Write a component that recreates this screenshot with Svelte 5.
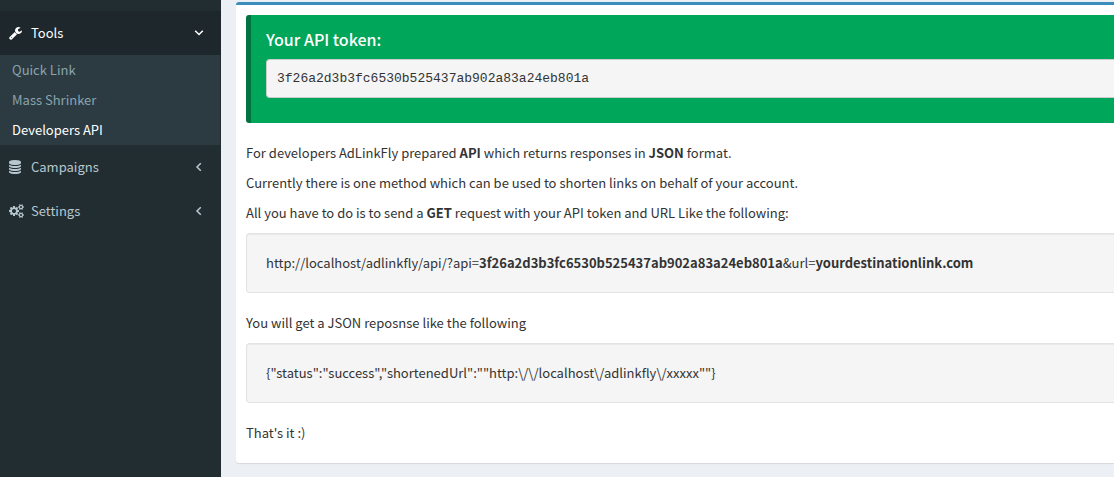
<script>
  const token = '3f26a2d3b3fc6530b525437ab902a83a24eb801a';
  const response = '{"status":"success","shortenedUrl":""http:\\/\\/localhost\\/adlinkfly\\/xxxxx""}';

  const cog =
    'v140q0 16-149 31-12 27-30 52 51 113 51 138 0 4-4 7-122 71-124 71-8 0-46-47t-52-68q-20 2-30 2t-30-2q-14 21-52 68t-46 47q-2 0-124-71-4-3-4-7 0-25 51-138-18-25-30-52-149-15-149-31v-140q0-16 149-31 13-29 30-52-51-113-51-138 0-4 4-7 4-2 35-20t59-34 30-16q8 0 46 46.5t52 67.5q20-2 30-2t30 2q51-71 92-112l6-2q4 0 124 70 4 3 4 7 0 25-51 138 17 23 30 52 149 15 149 31z';

  const icons = {
    wrench: {
      box: '64 0 1664 1792',
      width: 13,
      path: 'M448 1472q0-26-19-45t-45-19-45 19-19 45 19 45 45 19 45-19 19-45zm644-420l-682 682q-37 37-90 37-52 0-91-37l-106-108q-38-36-38-90 0-53 38-91l681-681q39 98 114.5 173.5t173.5 114.5zm634-435q0 39-23 106-47 134-164.5 217.5t-258.5 83.5q-185 0-316.5-131.5t-131.5-316.5 131.5-316.5 316.5-131.5q58 0 121.5 16.5t107.5 46.5q16 11 16 28t-16 28l-293 169v224l193 107q5-3 79-48.5t135.5-81 70.5-35.5q15 0 23.5 10t8.5 25z'
    },
    database: {
      box: '128 0 1536 1792',
      width: 12,
      path: 'M896 768q237 0 443-43t325-127v170q0 69-103 128t-280 93.5-385 34.5-385-34.5-280-93.5-103-128v-170q119 84 325 127t443 43zm0 768q237 0 443-43t325-127v170q0 69-103 128t-280 93.5-385 34.5-385-34.5-280-93.5-103-128v-170q119 84 325 127t443 43zm0-384q237 0 443-43t325-127v170q0 69-103 128t-280 93.5-385 34.5-385-34.5-280-93.5-103-128v-170q119 84 325 127t443 43zm0-1152q208 0 385 34.5t280 93.5 103 128v128q0 69-103 128t-280 93.5-385 34.5-385-34.5-280-93.5-103-128v-128q0-69 103-128t280-93.5 385-34.5z'
    },
    cogs: {
      box: '0 0 1920 1792',
      width: 15,
      path:
        'M896 896q0-106-75-181t-181-75-181 75-75 181 75 181 181 75 181-75 75-181zm768 512q0-52-38-90t-90-38-90 38-38 90q0 53 37.5 90.5t90.5 37.5 90.5-37.5 37.5-90.5zm0-1024q0-52-38-90t-90-38-90 38-38 90q0 53 37.5 90.5t90.5 37.5 90.5-37.5 37.5-90.5zm-384 421v185q0 10-7 19.5t-16 10.5l-155 24q-11 35-32 76 34 48 90 115 7 11 7 20 0 12-7 19-23 30-82.5 89.5t-78.5 59.5q-11 0-21-7l-115-90q-37 19-77 31-11 108-23 155-7 24-30 24h-186q-11 0-20-7.5t-10-17.5l-23-153q-34-10-75-31l-118 89q-7 7-20 7-11 0-21-8-144-133-144-160 0-9 7-19 10-14 41-53t47-61q-23-44-35-82l-152-24q-10-1-17-9.5t-7-19.5v-185q0-10 7-19.5t16-10.5l155-24q11-35 32-76-34-48-90-115-7-11-7-20 0-12 7-20 22-30 82-89t79-59q11 0 21 7l115 90q34-18 77-32 11-108 23-154 7-24 30-24h186q11 0 20 7.5t10 17.5l23 153q34 10 75 31l118-89q8-7 20-7 11 0 21 8 144 133 144 160 0 8-7 19-12 16-42 54t-45 60q23 48 34 82l152 23q10 2 17 10.5t7 19.5z' +
        'M1920 1338' + cog + 'M1920 314' + cog
    }
  };

  let menu = $state([
    {
      label: 'Tools',
      icon: icons.wrench,
      open: true,
      links: ['Quick Link', 'Mass Shrinker', 'Developers API']
    },
    { label: 'Campaigns', icon: icons.database, open: false, links: [] },
    { label: 'Settings', icon: icons.cogs, open: false, links: [] }
  ]);
</script>

<div class="page">
  <nav class="sidebar">
    <ul>
      {#each menu as item}
        <li>
          <button
            type="button"
            class="item"
            class:open={item.open}
            aria-expanded={item.open}
            onclick={() => (item.open = !item.open)}
          >
            <span class="icon">
              <svg viewBox={item.icon.box} width={item.icon.width} height="14" aria-hidden="true">
                <path d={item.icon.path} />
              </svg>
            </span>
            <span class="label">{item.label}</span>
            <svg class="arrow" viewBox="0 0 10 10" width="10" height="10" aria-hidden="true">
              {#if item.open}
                <path d="M1.2 2.7 5 6.5 8.8 2.7" />
              {:else}
                <path d="M6.8 1.2 3 5 6.8 8.8" />
              {/if}
            </svg>
          </button>
          {#if item.open && item.links.length}
            <ul class="submenu">
              {#each item.links as link}
                <li><a href="#top" class:current={link === 'Developers API'}>{link}</a></li>
              {/each}
            </ul>
          {/if}
        </li>
      {/each}
    </ul>
  </nav>

  <main>
    <section class="box">
      <div class="callout">
        <h4>Your API token:</h4>
        <pre>{token}</pre>
      </div>
      <p>For developers AdLinkFly prepared <b>API</b> which returns responses in <b>JSON</b> format.</p>
      <p>Currently there is one method which can be used to shorten links on behalf of your account.</p>
      <p>All you have to do is to send a <b>GET</b> request with your API token and URL Like the following:</p>
      <div class="well">http://localhost/adlinkfly/api/?api=<b>{token}</b>&amp;url=<b>yourdestinationlink.com</b></div>
      <p>You will get a JSON reposnse like the following</p>
      <div class="well">{response}</div>
      <p>That's it :)</p>
    </section>
  </main>
</div>

<style>
  :global(body) {
    margin: 0;
    background: #ecf0f5;
  }

  .page {
    display: flex;
    min-height: 100vh;
    box-sizing: border-box;
    font: 13px/20px "Source Sans Pro", "Noto Sans CJK SC", sans-serif;
    color: #333;
  }

  .sidebar {
    flex: none;
    width: 221px;
    box-sizing: border-box;
    padding: 11px 0;
    background: #222d32;
  }

  ul {
    margin: 0;
    padding: 0;
    list-style: none;
  }

  .item {
    display: flex;
    align-items: center;
    width: 100%;
    height: 44px;
    padding: 0 17px 0 9px;
    border: 0;
    background: transparent;
    color: #b8c7ce;
    font: inherit;
    text-align: left;
    cursor: pointer;
  }

  .item.open {
    background: #1e282c;
    color: #fff;
  }

  .icon {
    flex: none;
    width: 22px;
  }

  .icon svg {
    display: block;
    fill: currentColor;
  }

  .label {
    flex: 1;
  }

  .arrow {
    fill: none;
    stroke: currentColor;
    stroke-width: 1.5;
  }

  .submenu {
    margin-right: 1px;
    background: #2c3b41;
  }

  .submenu a {
    display: block;
    padding: 5px 12px;
    color: #8aa4af;
    text-decoration: none;
  }

  .submenu a.current,
  .submenu a:hover {
    color: #fff;
  }

  main {
    flex: 1;
    min-width: 0;
    padding: 2px 0 14px 15px;
  }

  .box {
    padding: 10px 0 10px 10px;
    border-top: 3px solid #3c8dbc;
    border-radius: 3px 0 0 3px;
    background: #fff;
    box-shadow: 0 1px 1px rgba(0, 0, 0, 0.1);
  }

  .callout {
    margin-bottom: 20px;
    padding: 15px 0 15px 15px;
    border-left: 5px solid #00733e;
    border-radius: 3px 0 0 3px;
    background: #00a65a;
    color: #fff;
  }

  h4 {
    margin: 0 0 11px;
    font-size: 16px;
    line-height: 18px;
    font-weight: 500;
  }

  pre {
    margin: 0 0 10px;
    padding: 10px;
    border: 1px solid #ccc;
    border-right: 0;
    border-radius: 4px 0 0 4px;
    background: #f5f5f5;
    color: #333;
    font: 13px/17px "Liberation Mono", monospace;
    overflow: hidden;
  }

  p {
    margin: 0 0 10px;
  }

  .well {
    margin-bottom: 20px;
    padding: 19px;
    border: 1px solid #e3e3e3;
    border-right: 0;
    border-radius: 4px 0 0 4px;
    background: #f5f5f5;
    box-shadow: inset 0 1px 1px rgba(0, 0, 0, 0.05);
    overflow-wrap: anywhere;
  }
</style>
